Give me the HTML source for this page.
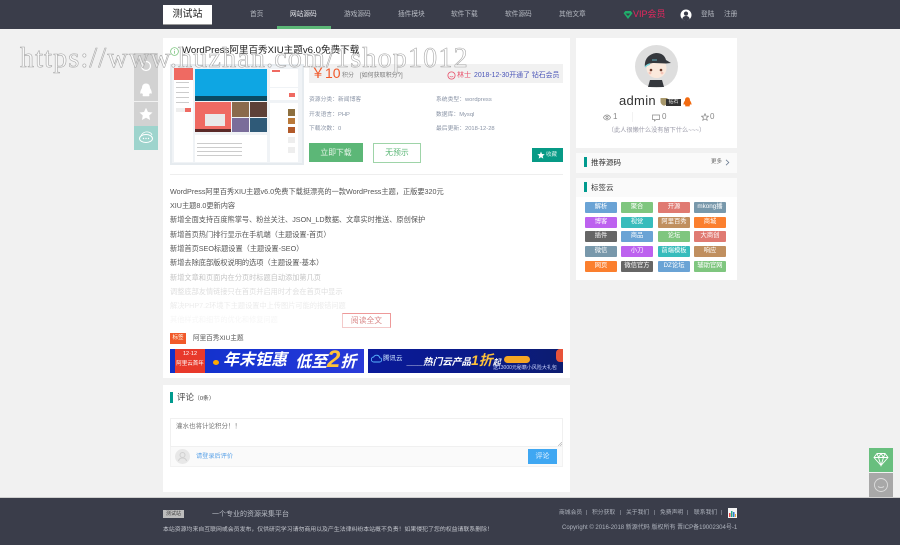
<!DOCTYPE html>
<html><head><meta charset="utf-8">
<style>
*{box-sizing:border-box;margin:0;padding:0}
html,body{width:900px;height:545px;overflow:hidden;background:#f1f1f1}
body{position:relative;font-family:"Liberation Sans","Noto Sans CJK SC",sans-serif;font-size:7px;color:#666;filter:blur(.25px)}
.a{position:absolute;white-space:nowrap}
.box{position:absolute;background:#fff}
.nav{top:9px;font-size:6.7px;color:#b6bac2;line-height:11px}
.bar{position:absolute;width:3px;background:#009a8e}
.meta{font-size:5.8px;color:#8a94a6;line-height:10px}
.p{left:170px;font-size:7.2px;color:#555;line-height:11px}
.tag{position:absolute;width:32px;height:10.500px;color:#fff;font-size:6.300px;line-height:10.500px;text-align:center;border-radius:1px;white-space:nowrap;overflow:hidden}
.side{position:absolute;left:134px;width:24px;height:24px;background:#d2d2d2}
.fl{color:#aeb3bd;font-size:5.800px;line-height:10px;top:508px}
.ln{position:absolute;height:1px;background:#ccc}
</style></head><body>

<!-- header -->
<div class="box" style="left:0;top:0;width:900px;height:29px;background:#3a3d4a"></div>
<div class="box" style="left:163px;top:5px;width:49px;height:20px;border-bottom:1px solid #999"></div>
<div class="a" style="left:163px;top:5px;width:49px;text-align:center;font-size:10px;line-height:19px;color:#222">测试站</div>
<div class="a nav" style="left:250px">首页</div>
<div class="a nav" style="left:290px;color:#e6e8ec">网站源码</div>
<div class="box" style="left:277px;top:26px;width:54px;height:3px;background:#5cb777"></div>
<div class="a nav" style="left:344px">游戏源码</div>
<div class="a nav" style="left:398px">插件模块</div>
<div class="a nav" style="left:451px">软件下载</div>
<div class="a nav" style="left:505px">软件源码</div>
<div class="a nav" style="left:559px">其他文章</div>
<svg class="a" style="left:623px;top:10px" width="10" height="10" viewBox="0 0 10 10"><path d="M.6 3.200 2.300 1h5.400l1.700 2.200L5 9z" fill="#1fae6a"/><path d="M2.500 3.500h5L5 6z" fill="#3a3d4a"/></svg>
<div class="a" style="left:633px;top:8px;font-size:9px;line-height:13px;color:#e8265e">VIP会员</div>
<svg class="a" style="left:680px;top:9px" width="12" height="12" viewBox="0 0 12 12"><circle cx="6" cy="6" r="5.500" fill="#fff"/><circle cx="6" cy="4.600" r="2.100" fill="#3a3d4a"/><path d="M2.300 10c.5-2.400 2-3 3.700-3s3.200.6 3.700 3a5 5 0 0 1-7.400 0z" fill="#3a3d4a"/></svg>
<div class="a nav" style="left:701px">登陆</div>
<div class="a nav" style="left:724px">注册</div>

<!-- main card -->
<div class="box" style="left:163px;top:38px;width:407px;height:340px"></div>
<svg class="a" style="left:170px;top:47px" width="9" height="9" viewBox="0 0 9 9"><circle cx="4.500" cy="4.500" r="3.900" fill="none" stroke="#7cc47f" stroke-width=".8"/><path d="M4.600 2.200v.8M4.500 3.800V6.800" stroke="#7cc47f" stroke-width=".8"/></svg>
<div class="a" style="left:182px;top:44px;font-size:9.600px;line-height:14px;color:#222">WordPress阿里百秀XIU主题v6.0免费下载</div>

<!-- product screenshot -->
<div class="box" style="left:170px;top:64px;width:134px;height:101px;background:#e6ebef"></div>
<div class="box" style="left:172px;top:66px;width:130px;height:97px;background:#f0f3f6"></div>
<div class="box" style="left:174px;top:68px;width:19px;height:94px"></div>
<div class="box" style="left:174px;top:68px;width:19px;height:12px;background:#ef6a62"></div>
<div class="box" style="left:195px;top:69px;width:72px;height:27px;background:#0ea6e3"></div>
<div class="box" style="left:195px;top:96px;width:72px;height:5px;background:#0a4a63"></div>
<div class="box" style="left:195px;top:102px;width:36px;height:30px;background:#ef6a62"></div>
<div class="box" style="left:205px;top:114px;width:20px;height:12px;background:#e9e9e9"></div>
<div class="box" style="left:195px;top:129px;width:36px;height:3px;background:#5a2a28"></div>
<div class="box" style="left:232px;top:102px;width:17px;height:15px;background:#8a6a4c"></div>
<div class="box" style="left:250px;top:102px;width:17px;height:15px;background:#5d4037"></div>
<div class="box" style="left:232px;top:118px;width:17px;height:14px;background:#7a6d9a"></div>
<div class="box" style="left:250px;top:118px;width:17px;height:14px;background:#2f5a78"></div>
<div class="box" style="left:195px;top:135px;width:72px;height:27px"></div>
<div class="ln" style="left:197px;top:143px;width:45px"></div>
<div class="ln" style="left:197px;top:147px;width:45px"></div>
<div class="ln" style="left:197px;top:151px;width:45px"></div>
<div class="ln" style="left:197px;top:155px;width:45px"></div>
<div class="ln" style="left:176px;top:82px;width:13px"></div>
<div class="ln" style="left:176px;top:87px;width:13px"></div>
<div class="ln" style="left:176px;top:92px;width:13px"></div>
<div class="ln" style="left:176px;top:97px;width:13px"></div>
<div class="ln" style="left:176px;top:102px;width:13px"></div>
<div class="box" style="left:176px;top:108px;width:9px;height:4px;background:#eee"></div>
<div class="box" style="left:185px;top:108px;width:6px;height:4px;background:#ef6a62"></div>
<div class="box" style="left:270px;top:69px;width:28px;height:18px"></div>
<div class="box" style="left:270px;top:88px;width:28px;height:12px"></div>
<div class="box" style="left:270px;top:103px;width:28px;height:59px"></div>
<div class="box" style="left:272px;top:70px;width:8px;height:2px;background:#ef6a62"></div>
<div class="box" style="left:289px;top:93px;width:6px;height:4px;background:#ef6a62"></div>
<div class="box" style="left:288px;top:109px;width:7px;height:7px;background:#8d6f3f"></div>
<div class="box" style="left:288px;top:118px;width:7px;height:6px;background:#b9793a"></div>
<div class="box" style="left:288px;top:127px;width:7px;height:6px;background:#b25a2a"></div>
<div class="box" style="left:288px;top:137px;width:7px;height:6px;background:#eee"></div>
<div class="box" style="left:288px;top:147px;width:7px;height:6px;background:#eee"></div>

<!-- price bar -->
<div class="box" style="left:309px;top:64px;width:254px;height:19px;background:#f1f1f1"></div>
<div class="a" style="left:311px;top:65px;font-size:14px;line-height:17px;color:#f1592a">￥10</div>
<div class="a" style="left:342px;top:71px;font-size:6px;line-height:10px;color:#888">积分</div>
<div class="a" style="left:360px;top:71px;font-size:6px;line-height:10px;color:#777">[如何获取积分?]</div>
<svg class="a" style="left:447px;top:71px" width="9" height="9" viewBox="0 0 9 9"><circle cx="4.500" cy="4.500" r="3.600" fill="none" stroke="#e8506a" stroke-width=".8"/><path d="M2.800 5.200c.8 1 2.600 1 3.400 0" stroke="#e8506a" stroke-width=".7" fill="none"/></svg>
<div class="a" style="left:457px;top:71px;font-size:7px;line-height:10px;color:#e8506a">林士</div>
<div class="a" style="left:474px;top:71px;font-size:6.900px;line-height:10px;color:#4a55b8">2018-12-30开通了 钻石会员</div>

<!-- meta -->
<div class="a meta" style="left:309px;top:95px">资源分类：新闻博客</div>
<div class="a meta" style="left:436px;top:95px">系统类型：wordpress</div>
<div class="a meta" style="left:309px;top:110px">开发语言：PHP</div>
<div class="a meta" style="left:436px;top:110px">数据库：Mysql</div>
<div class="a meta" style="left:309px;top:124px">下载次数：0</div>
<div class="a meta" style="left:436px;top:124px">最后更新：2018-12-28</div>

<div class="box" style="left:309px;top:143px;width:54px;height:19px;background:#5cb777;color:#e8f5ea;text-align:center;font-size:7.800px;line-height:19px">立即下载</div>
<div class="box" style="left:373px;top:143px;width:48px;height:20px;border:1px solid #9ed4a8;color:#5cb777;text-align:center;font-size:7.800px;line-height:18px">无预示</div>
<div class="box" style="left:532px;top:148px;width:31px;height:14px;background:#079a86;color:#d6efe9;font-size:5.500px;line-height:14px;padding-left:14px">收藏</div>
<svg class="a" style="left:537px;top:151px" width="8" height="8" viewBox="0 0 8 8"><path d="M4 .5 5 3l2.700.2-2 1.800.6 2.600L4 6.200 1.700 7.600l.6-2.600-2-1.800L3 3z" fill="#fff"/></svg>
<div class="box" style="left:170px;top:174px;width:393px;height:1px;background:#eee"></div>

<!-- article -->
<div class="a p" style="top:186px">WordPress阿里百秀XIU主题v6.0免费下载挺漂亮的一款WordPress主题，正版要320元</div>
<div class="a p" style="top:200px">XIU主题8.0更新内容</div>
<div class="a p" style="top:214px">新增全面支持百度熊掌号、粉丝关注、JSON_LD数据、文章实时推送、原创保护</div>
<div class="a p" style="top:229px">新增首页热门排行显示在手机端（主题设置-首页）</div>
<div class="a p" style="top:243px">新增首页SEO标题设置（主题设置-SEO）</div>
<div class="a p" style="top:257px">新增去除底部版权说明的选项（主题设置-基本）</div>
<div class="a p" style="top:272px;color:#c4c4c4">新增文章和页面内在分页时标题自动添加第几页</div>
<div class="a p" style="top:286px;color:#dedede">调整底部友情链接只在首页并启用时才会在首页中显示</div>
<div class="a p" style="top:300px;color:#ececec">解决PHP7.2环境下主题设置中上传图片可能的报错问题</div>
<div class="a p" style="top:314px;color:#f6f6f6">其他样式和细节的优化和修复问题</div>
<div class="box" style="left:342px;top:313px;width:49px;height:15px;border:1px solid #e99;border-left-color:#f3caca;border-bottom-color:#f3caca;color:#d98a8a;text-align:center;font-size:7.800px;line-height:13px">阅读全文</div>

<div class="box" style="left:170px;top:333px;width:16px;height:11px;background:#f1592a;color:#ffe;font-size:5.500px;line-height:11px;text-align:center">标签</div>
<div class="a" style="left:193px;top:333px;font-size:6.600px;line-height:11px;color:#555">阿里百秀XIU主题</div>

<!-- banners -->
<div class="box" style="left:170px;top:349px;width:194px;height:24px;background:linear-gradient(90deg,#1030c8,#1a35d4 50%,#2a3bd8);overflow:hidden">
 <div class="a" style="left:5px;top:0;width:30px;height:24px;background:#e8392b;color:#fff;font-size:5.500px;line-height:10px;text-align:center">12·12<br>阿里云首年</div>
 <div class="a" style="left:43px;top:11px;width:6px;height:5px;border-radius:50%;background:#fa0"></div>
 <div class="a" style="left:53px;top:2px;font-size:16px;line-height:20px;font-weight:bold;font-style:italic;color:#fff">年末钜惠</div>
 <div class="a" style="left:125px;top:1px;font-size:16px;line-height:22px;font-weight:bold;font-style:italic;color:#fff">低至<span style="color:#ffc23a;font-size:24px;line-height:20px">2</span>折</div>
</div>
<div class="box" style="left:368px;top:349px;width:195px;height:24px;background:linear-gradient(90deg,#0a1a9a,#0a1a8a 50%,#0c1c70);overflow:hidden">
 <svg class="a" style="left:3px;top:5px" width="11" height="9" viewBox="0 0 11 9"><path d="M3 8a2.500 2.500 0 0 1-.3-5 3.200 3.200 0 0 1 6 .8A2.100 2.100 0 0 1 8.500 8z" fill="none" stroke="#5ab4ff" stroke-width=".9"/></svg>
 <div class="a" style="left:15px;top:5px;font-size:6.500px;line-height:10px;color:#cfe6ff">腾讯云</div>
 <div class="a" style="left:39px;top:4px;font-size:9.600px;line-height:15px;font-weight:bold;font-style:italic;color:#fff">___热门云产品<span style="color:#ffc23a;font-size:14px">1折</span><span style="font-size:8px">起</span></div>
 <div class="a" style="left:136px;top:7px;width:26px;height:7px;border-radius:4px;background:#f5a623"></div>
 <div class="a" style="left:125px;top:16px;font-size:5px;line-height:7px;color:#cdd6ff">送13000元秘籍小风险大礼包</div>
 <div class="a" style="left:188px;top:0;width:7px;height:13px;background:#e8533a;border-radius:4px 0 0 4px"></div>
</div>

<!-- comments -->
<div class="box" style="left:163px;top:385px;width:407px;height:107px"></div>
<div class="bar" style="left:170px;top:392px;height:11px"></div>
<div class="a" style="left:177px;top:391px;font-size:8.500px;line-height:13px;color:#444">评论<span style="font-size:5.800px">（0条）</span></div>
<div class="box" style="left:170px;top:418px;width:393px;height:29px;border:1px solid #f0f0f0;padding:3px 5px;font-size:6.500px;line-height:10px;color:#777">灌水也将计论积分！！</div>
<svg class="a" style="left:558px;top:442px" width="4" height="4"><path d="M0 4 4 0M2 4 4 2" stroke="#aaa" stroke-width=".6"/></svg>
<div class="box" style="left:170px;top:447px;width:393px;height:20px;background:#fafafa;border:1px solid #f2f2f2;border-top:0"></div>
<svg class="a" style="left:175px;top:449px" width="15" height="15" viewBox="0 0 15 15"><circle cx="7.500" cy="7.500" r="7.500" fill="#e8e8e8"/><circle cx="7.500" cy="6" r="2.500" fill="none" stroke="#d0d0d0"/><path d="M3.500 12c.5-2.500 2-3 4-3s3.500.5 4 3" fill="none" stroke="#d0d0d0"/></svg>
<div class="a" style="left:196px;top:451px;font-size:6.200px;line-height:11px;color:#5aa2e8">请登录后评价</div>
<div class="box" style="left:528px;top:449px;width:29px;height:15px;background:#3fa7f2;color:#e6f3ff;text-align:center;font-size:7px;line-height:15px">评论</div>

<!-- sidebar -->
<div class="box" style="left:576px;top:38px;width:161px;height:110px"></div>
<svg class="a" style="left:635px;top:45px" width="43" height="43" viewBox="0 0 43 43">
 <circle cx="21.500" cy="21.500" r="21.500" fill="#dedede"/>
 <circle cx="21.500" cy="23" r="10" fill="#fbe9dc"/>
 <path d="M10 22c-1-8 4-13 11-14 6 0 9 3 10 7l5 3-5 .5-12-.5c-3 0-7 1-9 4z" fill="#35383d"/>
 <path d="M17 15h5" stroke="#6fd0e0" stroke-width=".8"/>
 <path d="M10 22c2-2 3-2.500 5-3" stroke="#7fd4dc" stroke-width="1.500" fill="none"/>
 <circle cx="16" cy="25" r="1.300" fill="#6a3a2a"/><circle cx="26" cy="25" r="1.300" fill="#6a3a2a"/>
 <circle cx="15" cy="28" r="1.400" fill="#f4c4b8"/><circle cx="27" cy="28" r="1.400" fill="#f4c4b8"/>
 <path d="M15 35h12l2 7H13z" fill="#35383d"/>
</svg>
<div class="a" style="left:619px;top:92px;font-size:13px;line-height:17px;color:#333;letter-spacing:.3px">admin</div>
<svg class="a" style="left:660px;top:97px" width="8" height="9" viewBox="0 0 8 9"><path d="M.5 1h7v3.500C7.500 7 5.500 8.200 4 8.800 2.500 8.200.5 7 .5 4.500z" fill="#a8986c"/></svg>
<div class="box" style="left:666px;top:99px;width:15px;height:7px;background:#333;color:#eee;font-size:5px;line-height:7px;text-align:center">钻石</div>
<svg class="a" style="left:683px;top:97px" width="9" height="10" viewBox="0 0 9 10"><path d="M4.500.3C6.500.3 7 2 7 3.500c.8 1 1.600 2.500 1.500 4-.4.500-1 0-1.200-.4-.2.600-.5 1-.8 1.300.5.300.6.800 0 1H2.500c-.6-.2-.5-.7 0-1-.3-.3-.6-.7-.8-1.300-.2.400-.8.900-1.200.4C.4 6 1.200 4.500 2 3.500 2 2 2.500.3 4.500.3z" fill="#f26a10"/></svg>

<svg class="a" style="left:603px;top:114px" width="8" height="7" viewBox="0 0 8 7"><path d="M.4 3.500C1.500 1.500 2.800 1 4 1s2.500.5 3.600 2.500C6.500 5.500 5.200 6 4 6S1.500 5.500.4 3.500z" fill="none" stroke="#888" stroke-width=".7"/><circle cx="4" cy="3.500" r="1.100" fill="none" stroke="#888" stroke-width=".7"/></svg>
<div class="a" style="left:613px;top:111px;font-size:8px;line-height:11px;color:#888">1</div>
<div class="box" style="left:632px;top:112px;width:1px;height:10px;background:#f2f2f2"></div>
<svg class="a" style="left:652px;top:114px" width="8" height="8" viewBox="0 0 8 8"><path d="M.5 1h7v4.500H4L2.500 7V5.500h-2z" fill="none" stroke="#888" stroke-width=".7"/></svg>
<div class="a" style="left:662px;top:111px;font-size:8px;line-height:11px;color:#888">0</div>
<svg class="a" style="left:701px;top:113px" width="8" height="8" viewBox="0 0 8 8"><path d="M4 .7 5 3l2.500.2-1.900 1.600.6 2.500L4 6 1.800 7.300l.6-2.500L.5 3.200 3 3z" fill="none" stroke="#888" stroke-width=".7"/></svg>
<div class="a" style="left:710px;top:111px;font-size:8px;line-height:11px;color:#888">0</div>
<div class="a" style="left:576px;top:126px;width:161px;text-align:center;font-size:6.200px;line-height:10px;color:#9a9aa8">（此人很懒什么没有留下什么~~~）</div>

<div class="box" style="left:576px;top:153px;width:161px;height:20px;background:#fafafa"></div>
<div class="bar" style="left:584px;top:157px;height:10px"></div>
<div class="a" style="left:591px;top:157px;font-size:7.500px;line-height:11px;color:#333">推荐源码</div>
<div class="a" style="left:711px;top:157px;font-size:5.500px;line-height:10px;color:#666">更多</div>
<svg class="a" style="left:725px;top:159px" width="5" height="7" viewBox="0 0 5 7"><path d="M1 .8 3.800 3.500 1 6.200" fill="none" stroke="#6a7a90" stroke-width=".8"/></svg>

<div class="box" style="left:576px;top:178px;width:161px;height:102px"></div>
<div class="box" style="left:576px;top:178px;width:161px;height:19px;background:#fafafa"></div>
<div class="bar" style="left:584px;top:182px;height:10px"></div>
<div class="a" style="left:591px;top:182px;font-size:7.500px;line-height:11px;color:#333">标签云</div>

<div class="tag" style="left:585px;top:202px;background:#6aa3d5">解析</div>
<div class="tag" style="left:621px;top:202px;background:#7fc67f">聚合</div>
<div class="tag" style="left:658px;top:202px;background:#e07a72">开源</div>
<div class="tag" style="left:694px;top:202px;background:#7898ab">mkong播</div>
<div class="tag" style="left:585px;top:217px;background:#bd62ef">博客</div>
<div class="tag" style="left:621px;top:217px;background:#37bcbc">视觉</div>
<div class="tag" style="left:658px;top:217px;background:#c08f5f">阿里百秀</div>
<div class="tag" style="left:694px;top:217px;background:#fb7f2e">商城</div>
<div class="tag" style="left:585px;top:231px;background:#666">插件</div>
<div class="tag" style="left:621px;top:231px;background:#6aa3d5">商品</div>
<div class="tag" style="left:658px;top:231px;background:#7fc67f">论坛</div>
<div class="tag" style="left:694px;top:231px;background:#e07a72">大商创</div>
<div class="tag" style="left:585px;top:246px;background:#7898ab">微信</div>
<div class="tag" style="left:621px;top:246px;background:#bd62ef">小刀</div>
<div class="tag" style="left:658px;top:246px;background:#37bcbc">前端模板</div>
<div class="tag" style="left:694px;top:246px;background:#c08f5f">响应</div>
<div class="tag" style="left:585px;top:261px;background:#fb7f2e">网页</div>
<div class="tag" style="left:621px;top:261px;background:#666">微信官方</div>
<div class="tag" style="left:658px;top:261px;background:#6aa3d5">DZ论坛</div>
<div class="tag" style="left:694px;top:261px;background:#7fc67f">辅助官网</div>

<!-- left floating buttons -->
<div class="side" style="top:53px"></div>
<svg class="a" style="left:140px;top:60px" width="12" height="12" viewBox="0 0 12 12"><circle cx="6" cy="6" r="4.500" fill="none" stroke="#fff" stroke-width="1.200"/></svg>
<div class="side" style="top:77px"></div>
<svg class="a" style="left:140px;top:83px" width="12" height="14" viewBox="0 0 12 14"><path d="M6 .5c3 0 4 2.300 4 4.500 1 1.500 2 3.500 1.700 5.500-.5.500-1.300 0-1.700-.5l-1 2c.8.500.5 1.200-.3 1.200H3.300c-.8 0-1.100-.7-.3-1.200l-1-2c-.4.500-1.200 1-1.700.5C0 8.500 1 6.500 2 5 2 2.800 3 .5 6 .5z" fill="#fff"/></svg>
<div class="side" style="top:102px"></div>
<svg class="a" style="left:139px;top:107px" width="14" height="14" viewBox="0 0 14 14"><path d="M7 .8 9 5l4.500.5-3.300 3 .9 4.500L7 10.800 2.900 13l.9-4.500L.5 5.500 5 5z" fill="#fff"/></svg>
<div class="side" style="top:126px;background:#9ed4cd"></div>
<svg class="a" style="left:138px;top:130px" width="16" height="15" viewBox="0 0 16 15"><ellipse cx="8" cy="8.500" rx="6.500" ry="4" fill="none" stroke="#fff"/><path d="M3 6c1-3 4-4.500 7-4 2 .3 3.500 1.300 4 3" fill="none" stroke="#fff" stroke-width=".8"/><circle cx="5.500" cy="8.500" r=".7" fill="#fff"/><circle cx="8" cy="8.500" r=".7" fill="#fff"/><circle cx="10.500" cy="8.500" r=".7" fill="#fff"/></svg>

<!-- right floating buttons -->
<div class="box" style="left:869px;top:448px;width:24px;height:24px;background:#68bf7e"></div>
<svg class="a" style="left:873px;top:452px" width="16" height="15" viewBox="0 0 16 15"><path d="M4 1.500h8L15 5.500 8 13.500 1 5.500zM1 5.500h14M5.500 5.500 8 13.500l2.500-8M4 1.500l1.500 4L8 1.500l2.500 4 1.500-4" fill="none" stroke="#fff" stroke-width=".9"/></svg>
<div class="box" style="left:869px;top:473px;width:24px;height:24px;background:#a8a8a8"></div>
<svg class="a" style="left:873px;top:477px" width="16" height="16" viewBox="0 0 16 16"><circle cx="8" cy="8" r="6.500" fill="none" stroke="#ddd" stroke-width=".9"/><path d="M5 9.500c1.500 1.300 4.500 1.300 6 0" fill="none" stroke="#ddd" stroke-width=".9"/></svg>

<!-- footer -->
<div class="box" style="left:0;top:498px;width:900px;height:47px;background:#3a3d4a"></div>
<div class="box" style="left:0;top:497px;width:900px;height:1px;background:#cfcfcf"></div>
<div class="box" style="left:163px;top:510px;width:21px;height:8px;background:#bdbdbd;color:#444;font-size:5px;line-height:8px;text-align:center">测试站</div>
<div class="a" style="left:212px;top:509px;font-size:7px;line-height:11px;color:#b8bcc4">一个专业的资源采集平台</div>
<div class="a" style="left:163px;top:525px;font-size:5.900px;line-height:10px;color:#c4c7ce">本站资源均来自互联网或会员发布，仅供研究学习请勿商用以及产生法律纠纷本站概不负责！如果侵犯了您的权益请联系删除！</div>
<div class="a fl" style="left:559px">商城会员</div><div class="a fl" style="left:586px">|</div>
<div class="a fl" style="left:592px">积分获取</div><div class="a fl" style="left:620px">|</div>
<div class="a fl" style="left:626px">关于我们</div><div class="a fl" style="left:654px">|</div>
<div class="a fl" style="left:660px">免费声明</div><div class="a fl" style="left:687px">|</div>
<div class="a fl" style="left:694px">联系我们</div><div class="a fl" style="left:721px">|</div>
<svg class="a" style="left:728px;top:508px" width="9" height="10" viewBox="0 0 9 10"><rect width="9" height="10" fill="#f4f4f4"/><rect x="1" y="5" width="1.500" height="4" fill="#e44"/><rect x="3" y="3" width="1.500" height="6" fill="#2a8"/><rect x="5" y="4" width="1.500" height="5" fill="#37c"/><rect x="7" y="6" width="1" height="3" fill="#ea3"/></svg>
<div class="a" style="left:562px;top:523px;font-size:6px;line-height:10px;color:#aeb3bd">Copyright © 2016-2018 新源代码 版权所有 晋ICP备19002304号-1</div>

<!-- watermark -->
<div class="a" style="left:20px;top:43px;font-family:'Liberation Serif',serif;font-size:28px;line-height:32px;letter-spacing:1.200px;color:rgba(255,255,255,.5);-webkit-text-stroke:.6px #a8a8a8">https://www.huzhan.com/1shop1012</div>
</body></html>
